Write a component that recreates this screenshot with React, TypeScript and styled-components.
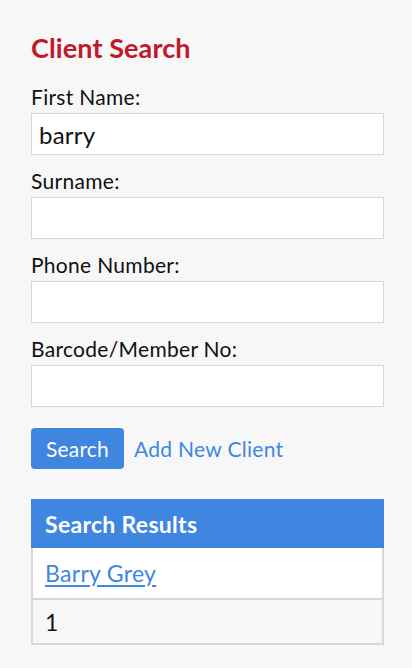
import styled, { createGlobalStyle } from "styled-components";

const GlobalStyle = createGlobalStyle`
    html, body {
        margin: 0;
        padding: 0;
        background: #f7f7f7;
        font-family: "Lato", "Liberation Sans", sans-serif;
        color: #111;
    }
`;

const fields = [
    { label: "First Name:", value: "barry" },
    { label: "Surname:", value: "" },
    { label: "Phone Number:", value: "" },
    { label: "Barcode/Member No:", value: "" },
];

export default function App() {
    return (
        <>
            <GlobalStyle />
            <Page>
                <Title>Client Search</Title>
                <Form>
                    {fields.map((f) => (
                        <Field key={f.label}>
                            <Label>{f.label}</Label>
                            <TextInput defaultValue={f.value} />
                        </Field>
                    ))}
                </Form>
                <Actions>
                    <SearchButton>Search</SearchButton>
                    <PlainLink href="#">Add New Client</PlainLink>
                </Actions>
                <Results>
                    <ResultsHeader>Search Results</ResultsHeader>
                    <ResultRow>
                        <ClientLink href="#">Barry Grey</ClientLink>
                    </ResultRow>
                    <ResultRow $muted>1</ResultRow>
                </Results>
            </Page>
        </>
    );
}

const Page = styled.div`
    width: 353px;
    padding: 31px 0 24px 31px;
`;

const Title = styled.h1`
    margin: 0;
    height: 34px;
    line-height: 34px;
    font-size: 27px;
    letter-spacing: 0.1px;
    font-weight: 700;
    color: #c0182c;
`;

const Form = styled.div`
    margin-top: 18px;
    display: flex;
    flex-direction: column;
    gap: 12px;
`;

const Field = styled.div`
    display: flex;
    flex-direction: column;
    gap: 3px;
`;

const Label = styled.label`
    font-size: 21px;
    letter-spacing: 0.3px;
    line-height: 27px;
    height: 27px;
`;

const TextInput = styled.input`
    box-sizing: border-box;
    width: 100%;
    height: 42px;
    margin: 0;
    padding: 0 7px;
    border: 1px solid #d6d6d6;
    border-radius: 0;
    background: #fff;
    font-family: "Lato", "Liberation Sans", sans-serif;
    font-size: 24px;
    letter-spacing: 0.2px;
    color: #111;
    outline: none;
`;

const Actions = styled.div`
    margin-top: 21px;
    display: flex;
    align-items: center;
    gap: 10px;
`;

const SearchButton = styled.button`
    height: 41px;
    width: 93px;
    border: none;
    border-radius: 4px;
    background: #3f86e1;
    color: #fff;
    font-family: "Lato", "Liberation Sans", sans-serif;
    font-size: 21px;
    letter-spacing: 0.2px;
    padding: 0;
`;

const PlainLink = styled.a`
    color: #3f86e1;
    text-decoration: none;
    font-size: 21px;
    letter-spacing: 0.3px;
`;

const Results = styled.div`
    margin-top: 30px;
    display: flex;
    flex-direction: column;
`;

const ResultsHeader = styled.div`
    box-sizing: border-box;
    height: 49px;
    padding: 0 14px;
    display: flex;
    align-items: center;
    background: #3f86e1;
    color: #fff;
    font-size: 23px;
    letter-spacing: 0.3px;
    font-weight: 700;
`;

const ResultRow = styled.div<{ $muted?: boolean }>`
    box-sizing: border-box;
    height: ${(p) => (p.$muted ? "45px" : "52px")};
    padding: 0 12px;
    display: flex;
    align-items: center;
    border: 2px solid #d8d8d8;
    border-top: none;
    background: ${(p) => (p.$muted ? "#f7f7f7" : "#fff")};
    font-size: 23px;
    letter-spacing: 0.3px;
`;

const ClientLink = styled.a`
    color: #3f86e1;
    text-decoration: underline;
    text-underline-offset: 3px;
`;
